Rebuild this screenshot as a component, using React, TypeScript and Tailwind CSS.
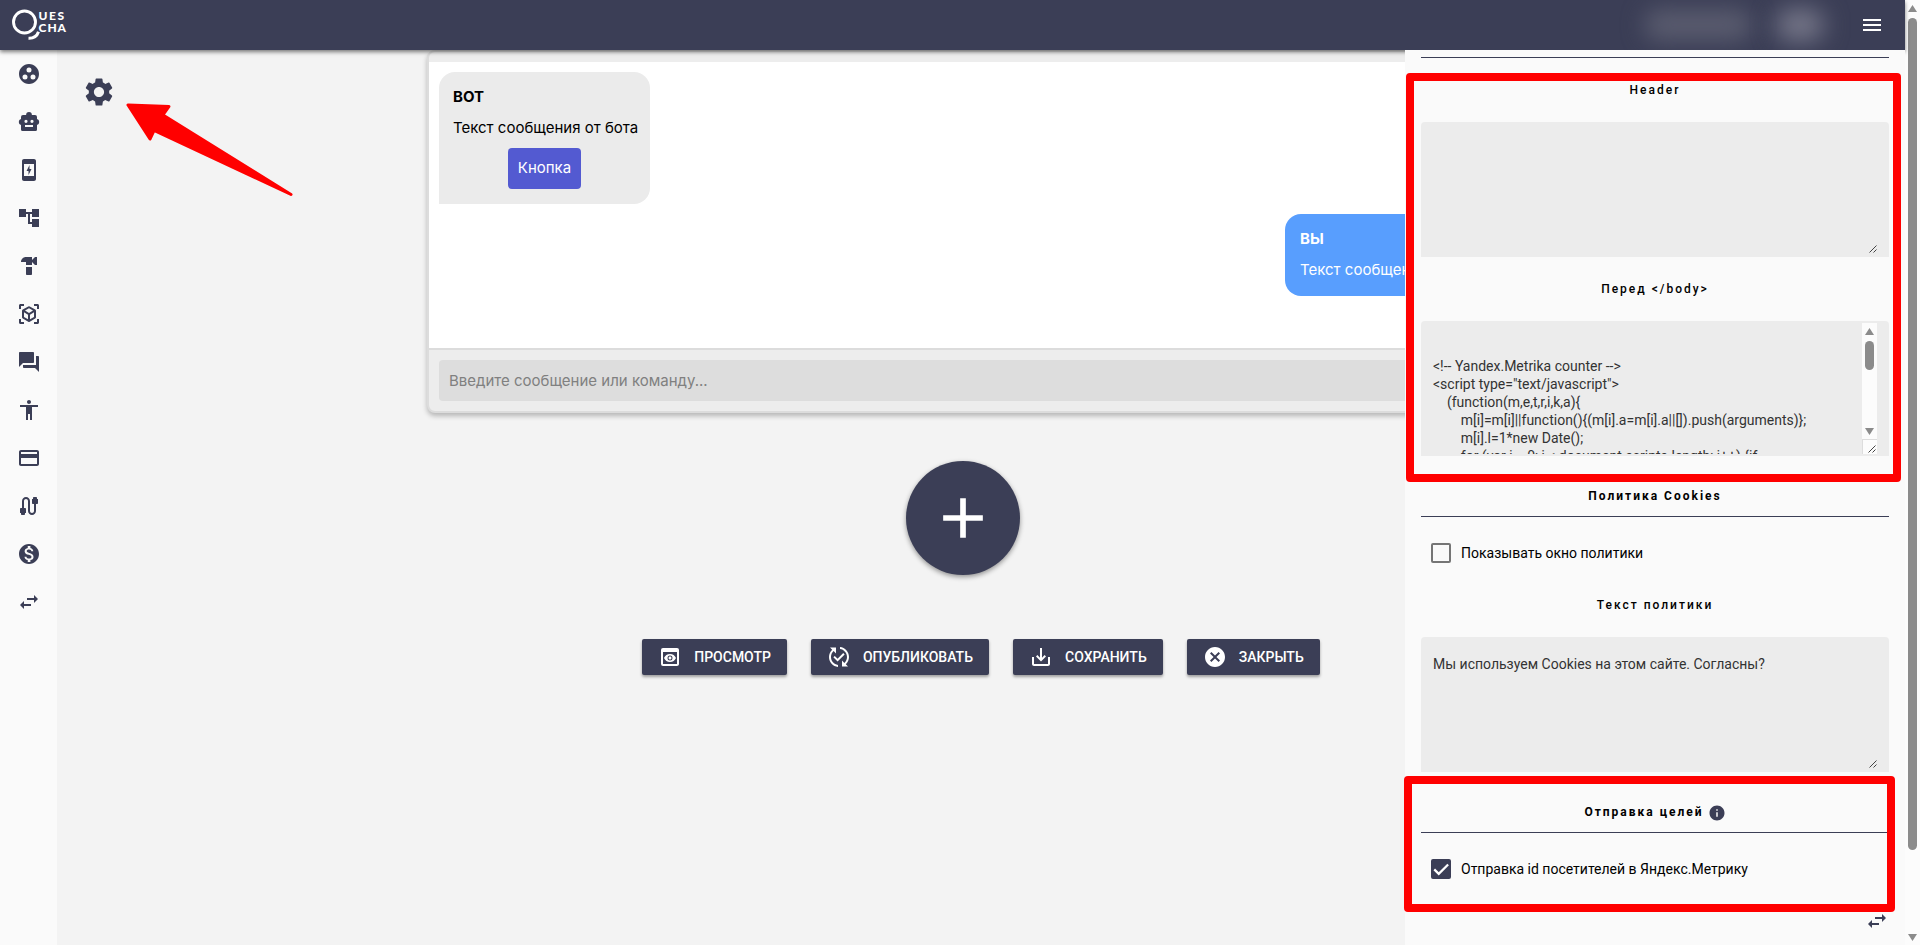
import React, { useId } from "react";
import type { ReactNode } from "react";
import type { IconType } from "react-icons";
import {
  MdAccessibility, MdAccountTree, MdAdd, MdCable, MdCancel, MdChargingStation, MdCreditCard,
  MdGroupWork, MdHardware, MdInfo, MdMenu, MdMonetizationOn, MdPreview, MdPublishedWithChanges,
  MdQuestionAnswer, MdSaveAlt, MdSettings, MdSwapHoriz, MdViewInAr,
} from "react-icons/md";

function RobotIcon() {
  return (
    <svg viewBox="0 0 24 24" className="size-6" fill="currentColor" aria-hidden="true">
      <path fillRule="evenodd" d="M12 2a3 3 0 0 1 2.900 3H18a2 2 0 0 1 2 2v2.100a3 3 0 0 1 0 5.800V19.500a1.500 1.500 0 0 1-1.500 1.500h-13A1.500 1.500 0 0 1 4 19.500V14.900A3 3 0 0 1 4 9.100V7a2 2 0 0 1 2-2h3.100A3 3 0 0 1 12 2zM9 9.700a1.600 1.600 0 1 0 0 3.200 1.600 1.600 0 0 0 0-3.200zm6 0a1.600 1.600 0 1 0 0 3.200 1.600 1.600 0 0 0 0-3.200zM8 15v2h8v-2z" />
    </svg>
  );
}

const navItems: { label: string; icon: IconType | (() => ReactNode) }[] = [
  { label: "Группы", icon: MdGroupWork },
  { label: "Боты", icon: RobotIcon },
  { label: "Приложение", icon: MdChargingStation },
  { label: "Сценарии", icon: MdAccountTree },
  { label: "Инструменты", icon: MdHardware },
  { label: "Виджеты", icon: MdViewInAr },
  { label: "Диалоги", icon: MdQuestionAnswer },
  { label: "Посетители", icon: MdAccessibility },
  { label: "Оплата", icon: MdCreditCard },
  { label: "Интеграции", icon: MdCable },
  { label: "Баланс", icon: MdMonetizationOn },
  { label: "Свернуть", icon: MdSwapHoriz },
];

const actions = [
  { label: "ПРОСМОТР", icon: MdPreview },
  { label: "ОПУБЛИКОВАТЬ", icon: MdPublishedWithChanges },
  { label: "СОХРАНИТЬ", icon: MdSaveAlt },
  { label: "ЗАКРЫТЬ", icon: MdCancel },
];

const counterCode = `

<!-- Yandex.Metrika counter -->
<script type="text/javascript">
    (function(m,e,t,r,i,k,a){
        m[i]=m[i]||function(){(m[i].a=m[i].a||[]).push(arguments)};
        m[i].l=1*new Date();
        for (var j = 0; j < document.scripts.length; j++) {if`.slice(1);

function Logo() {
  return (
    <a href="#" aria-label="Quescha" className="flex items-start">
      <svg viewBox="0 0 56 32" className="h-8 w-14" fill="none" stroke="#fff">
        <circle cx="12.500" cy="13" r="11" strokeWidth="2.900" />
        <path d="M16.500 29.200c5 .2 8.500-2 10-6.500" strokeWidth="3" />
        <g fill="#fff" stroke="none" fontFamily="Lato, sans-serif" fontWeight="900" fontSize="12">
          <text x="26.500" y="11">U</text><text x="37" y="11">E</text><text x="45.500" y="11">S</text>
          <text x="26.500" y="23">C</text><text x="35.500" y="23">H</text><text x="45.500" y="23">A</text>
        </g>
      </svg>
    </a>
  );
}

function ResizeGrip() {
  return (
    <svg viewBox="0 0 8 8" className="size-2" stroke="#444" strokeWidth="1" aria-hidden="true">
      <path d="M0.500 7.500l7-7M4.500 7.500l3-3" />
    </svg>
  );
}

function CodeScrollbar() {
  return (
    <div className="flex w-[15px] shrink-0 flex-col items-center bg-[#fcfcfc] pt-[5px]" aria-hidden="true">
      <svg viewBox="0 0 9 7" className="h-[7px] w-[9px]"><path d="M4.500 0L9 7H0z" fill="#8b8b8b" /></svg>
      <div className="mt-1.5 h-[29px] w-[9px] rounded-full bg-[#8b8b8b]" />
      <svg viewBox="0 0 9 7" className="mt-auto mb-1 h-[7px] w-[9px]"><path d="M0 0h9L4.500 7z" fill="#8b8b8b" /></svg>
      <div className="flex h-[15px] w-full items-end justify-end border-t border-l border-[#ddd] p-px"><ResizeGrip /></div>
    </div>
  );
}

function TextBlock({ title, value, scroll }: { title: string; value?: string; scroll?: boolean }) {
  const id = useId();
  return (
    <div className="flex flex-col">
      <label htmlFor={id} className="flex h-5 items-center justify-center text-xs font-medium tracking-[2px]">{title}</label>
      <div className="mt-[22px] flex h-[135px] rounded-t bg-[#ececec] py-0.5 pr-3 pl-3">
        <textarea
          id={id}
          defaultValue={value}
          className="min-w-0 flex-1 resize-none overflow-hidden whitespace-pre pt-4 text-sm leading-[18px] text-[#333] outline-none"
        />
        {scroll ? <CodeScrollbar /> : <span className="self-end pb-0.5"><ResizeGrip /></span>}
      </div>
    </div>
  );
}

function SectionTitle({ children }: { children: ReactNode }) {
  return (
    <h2 className="flex h-[31px] items-start justify-center border-b border-[#3b3e56] text-xs leading-5 font-bold tracking-[2px]">
      {children}
    </h2>
  );
}

function Check({ label, checked }: { label: string; checked?: boolean }) {
  return (
    <label className="flex h-10 items-center gap-2.5 pl-2.5 text-sm">
      <span className="grid size-5 place-items-center">
        <input
          type="checkbox"
          defaultChecked={checked}
          className="peer col-start-1 row-start-1 size-5 appearance-none rounded-xs border-2 border-[#757575] checked:border-[#3b3e56] checked:bg-[#3b3e56]"
        />
        <svg viewBox="0 0 24 24" className="pointer-events-none col-start-1 row-start-1 hidden size-[18px] peer-checked:block" fill="none" stroke="#fff" strokeWidth="3">
          <path d="M3 12.500l6 6L21.500 6" />
        </svg>
      </span>
      {label}
    </label>
  );
}

function SettingsPanel() {
  return (
    <aside className="relative z-30 flex w-[500px] shrink-0 flex-col bg-[#fafafa] pr-4 pl-4 text-black">
      <div className="h-2 border-b border-[#3b3e56]" />
      <div className="mt-[22px]"><TextBlock title="Header" /></div>
      <div className="mt-[22px]"><TextBlock title={"Перед </body>"} value={counterCode} scroll /></div>
      <div className="mt-[30px]"><SectionTitle>Политика Cookies</SectionTitle></div>
      <div className="mt-4"><Check label="Показывать окно политики" /></div>
      <div className="mt-[22px]"><TextBlock title="Текст политики" value="Мы используем Cookies на этом сайте. Согласны?" /></div>
      <div className="mt-[30px]">
        <SectionTitle>
          Отправка целей
          <MdInfo className="mt-0.5 ml-1 size-4.5 text-[#3b3e56]" />
        </SectionTitle>
      </div>
      <div className="mt-4"><Check label="Отправка id посетителей в Яндекс.Метрику" checked /></div>
      <button type="button" aria-label="Свернуть панель" className="mt-5 self-end text-[#3b3e56]"><MdSwapHoriz className="size-6" /></button>
      <div className="pointer-events-none absolute top-[23px] left-px h-[409px] w-[495px] rounded border-8 border-[#f00]" />
      <div className="pointer-events-none absolute top-[726px] -left-px h-[136px] w-[491px] rounded border-8 border-[#f00]" />
    </aside>
  );
}

function ChatPreview() {
  return (
    <section className="flex flex-col rounded-lg border-2 border-[#dcdcdc] bg-[#ededed] font-['Inter',sans-serif] text-[15px] shadow-[0_3px_5px_rgba(0,0,0,0.25)]">
      <div className="h-[10px]" />
      <div className="flex h-[286px] flex-col gap-2.5 bg-white p-2.5">
        <div className="flex h-33 w-[211px] flex-col rounded-2xl rounded-bl-none bg-[#ebebeb] px-3.5 pt-[15px]">
          <strong className="leading-5">BOT</strong>
          <p className="mt-[11px] leading-5 whitespace-nowrap">Текст сообщения от бота</p>
          <button type="button" className="mt-2.5 h-[41px] self-center rounded bg-[#535ad1] px-2.5 text-white">Кнопка</button>
        </div>
        <div className="flex h-[82px] w-[206px] flex-col self-end rounded-2xl rounded-br-none bg-[#589efe] px-[15px] pt-[15px] text-white">
          <strong className="leading-5">ВЫ</strong>
          <p className="mt-[11px] leading-5 whitespace-nowrap">Текст сообщения от вас</p>
        </div>
      </div>
      <div className="border-t-2 border-[#dcdcdc] p-2.5">
        <input
          aria-label="Сообщение"
          placeholder="Введите сообщение или команду..."
          className="h-[41px] w-full rounded bg-[#ddd] px-2.5 outline-none placeholder:text-[#808080]"
        />
      </div>
    </section>
  );
}

function PageScrollbar() {
  return (
    <div className="flex w-[15px] shrink-0 flex-col items-center bg-[#fcfcfc] pt-[5px] pb-1" aria-hidden="true">
      <svg viewBox="0 0 9 7" className="h-[7px] w-[9px]"><path d="M4.500 0L9 7H0z" fill="#8b8b8b" /></svg>
      <div className="mt-1.5 h-[832px] w-[9px] rounded-full bg-[#8b8b8b]" />
      <svg viewBox="0 0 9 7" className="mt-auto h-[7px] w-[9px]"><path d="M0 0h9L4.500 7z" fill="#8b8b8b" /></svg>
    </div>
  );
}

export default function App() {
  return (
    <div className="flex h-screen overflow-hidden bg-[#f3f3f3] font-['Roboto',sans-serif] text-black">
      <div className="flex min-w-0 flex-1 flex-col">
        <header className="relative z-20 flex h-[50px] shrink-0 items-center justify-between bg-[#3b3e56] pr-[21px] pl-3 shadow-[0_2px_4px_rgba(0,0,0,0.5)]">
          <Logo />
          <div className="flex items-center gap-6">
            <div className="h-8 w-[108px] rounded-full bg-[#595b6e] blur-[11px]" />
            <div className="h-8 w-12 rounded-full bg-[#77788a] blur-[12px]" />
            <button type="button" aria-label="Меню" className="ml-3 text-white"><MdMenu className="size-6" /></button>
          </div>
        </header>
        <div className="flex min-h-0 flex-1">
          <nav className="flex w-[57px] shrink-0 flex-col items-center gap-6 bg-[#fafafa] pt-3 text-[#3b3e56]">
            {navItems.map(({ label, icon: Icon }) => (
              <a key={label} href="#" aria-label={label}><Icon className="size-6" /></a>
            ))}
          </nav>
          <main className="relative flex min-w-0 flex-1 items-start">
            <button type="button" aria-label="Настройки" className="mt-[21px] ml-[21px] shrink-0 text-[#3b3e56]"><MdSettings className="size-[42px] p-1" /></button>
            <svg viewBox="0 0 168 96" className="absolute top-[52px] left-[69px] h-24 w-[168px]" aria-hidden="true">
              <path d="M2 3L43 4.500 37 13 165 92.500 28 28.500 24 37z" fill="#f00" stroke="#f00" strokeWidth="3" strokeLinejoin="round" />
            </svg>
            <div className="-mr-[98px] ml-auto flex w-[1076px] shrink-0 flex-col">
              <ChatPreview />
              <div className="mt-12 flex justify-center">
                <button type="button" aria-label="Добавить" className="mr-1 grid size-[114px] place-items-center rounded-full bg-[#3b3e56] text-white shadow-[0_2px_5px_rgba(0,0,0,0.4)]">
                  <MdAdd className="size-[68px]" />
                </button>
              </div>
              <div className="mt-16 flex justify-center gap-6 pl-8">
                {actions.map(({ label, icon: Icon }) => (
                  <button key={label} type="button" className="flex h-9 items-center gap-3 rounded-xs bg-[#3b3e56] px-4 text-sm font-medium text-white shadow-[0_2px_3px_rgba(0,0,0,0.35)]">
                    <Icon className="size-6" />
                    {label}
                  </button>
                ))}
              </div>
            </div>
          </main>
          <SettingsPanel />
        </div>
      </div>
      <PageScrollbar />
    </div>
  );
}
